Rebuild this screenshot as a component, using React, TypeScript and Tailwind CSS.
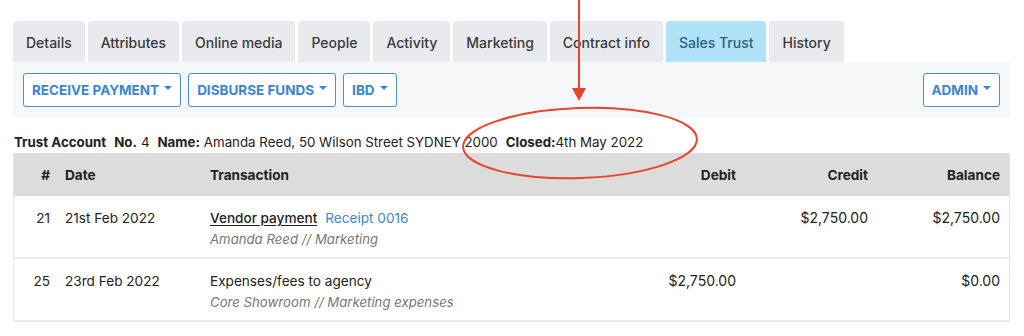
const tabs = ['Details', 'Attributes', 'Online media', 'People', 'Activity', 'Marketing', 'Contract info', 'Sales Trust', 'History'];

const rows = [
  { id: '21', date: '21st Feb 2022', title: 'Vendor payment', receipt: 'Receipt 0016', sub: 'Amanda Reed // Marketing', debit: '', credit: '$2,750.00', balance: '$2,750.00' },
  { id: '25', date: '23rd Feb 2022', title: 'Expenses/fees to agency', receipt: '', sub: 'Core Showroom // Marketing expenses', debit: '$2,750.00', credit: '', balance: '$0.00' },
];

function Caret() {
  return <span className="ml-[5px] inline-block w-0 h-0 border-l-[4px] border-r-[4px] border-t-[4px] border-l-transparent border-r-transparent border-t-[#3a86d0] relative top-[-2px]" />;
}

function DropButton({ label }: { label: string }) {
  return (
    <button className="h-[34px] px-[8px] flex items-center border border-[#4a90d9] rounded-[3px] bg-white text-[#3a86d0] text-[13.5px] font-bold uppercase">
      {label}
      <Caret />
    </button>
  );
}

const cols = 'grid grid-cols-[36px_160px_372px_154px_132px_132px]';

export default function App() {
  return (
    <div className="relative w-[1024px] h-[336px] overflow-hidden bg-white text-[#222] font-['Inter','Liberation_Sans',sans-serif] text-[13.6px]">
      <div className="pt-[21px] pl-[13px] w-[1010px]">
        {/* Tabs */}
        <div className="flex gap-[3px] h-[41px]">
          {tabs.map((t) => (
            <div
              key={t}
              className={`px-[13px] pt-[1px] flex items-center rounded-t-[4px] text-[14px] font-medium ${
                t === 'Sales Trust' ? 'bg-[#b0e3f8] text-[#2c5f8a]' : 'bg-[#e9eaee] text-[#3a3a3a]'
              }`}
            >
              {t}
            </div>
          ))}
        </div>

        {/* Toolbar */}
        <div className="h-[56px] bg-[#f6f7f9] flex items-center justify-between px-[10px]">
          <div className="flex gap-[7px]">
            <DropButton label="Receive payment" />
            <DropButton label="Disburse funds" />
            <DropButton label="IBD" />
          </div>
          <DropButton label="Admin" />
        </div>

        {/* Account info */}
        <div className="h-[35px] flex items-end pl-[1px] whitespace-nowrap text-[#222] text-[13.3px]">
          <b>Trust Account</b>
          <b className="ml-[8px]">No.</b>
          <span className="ml-[4px]">4</span>
          <b className="ml-[8px]">Name:</b>
          <span className="ml-[4px]">Amanda Reed, 50 Wilson Street SYDNEY 2000</span>
          <b className="ml-[8px]">Closed:</b>
          <span>4th May 2022</span>
        </div>

        {/* Table */}
        <div className="border-x border-[#e6e6e6]">
          <div className={`${cols} h-[43px] pt-[2px] items-center bg-[#dcdcdc] font-bold`}>
            <div className="text-right">#</div>
            <div className="pl-[15px]">Date</div>
            <div>Transaction</div>
            <div className="text-right">Debit</div>
            <div className="text-right">Credit</div>
            <div className="text-right">Balance</div>
          </div>
          {rows.map((r) => (
            <div key={r.id} className={`${cols} h-[63px] border-b-2 border-[#ececec] pt-[12px] leading-[20px]`}>
              <div className="text-right">{r.id}</div>
              <div className="pl-[15px]">{r.date}</div>
              <div>
                <div>
                  <span className={r.receipt ? 'underline underline-offset-2 font-medium' : ''}>{r.title}</span>
                  {r.receipt && <span className="ml-[8px] text-[#3a8ad6]">{r.receipt}</span>}
                </div>
                <div className="italic text-[#777] text-[13.2px] mt-[1px]">{r.sub}</div>
              </div>
              <div className="text-right text-[14px]">{r.debit}</div>
              <div className="text-right text-[14px]">{r.credit}</div>
              <div className="text-right text-[14px]">{r.balance}</div>
            </div>
          ))}
        </div>
      </div>

      {/* Red annotation */}
      <svg className="absolute left-0 top-0 pointer-events-none" width="1024" height="336">
        <line x1="579" y1="0" x2="579" y2="90" stroke="#e8452c" strokeWidth="2" />
        <polygon points="572,88 586,88 579,101" fill="#e8452c" />
        <ellipse cx="580" cy="143" rx="117" ry="35" fill="none" stroke="#e8452c" strokeWidth="2" transform="rotate(-2 580 143)" />
      </svg>
    </div>
  );
}
